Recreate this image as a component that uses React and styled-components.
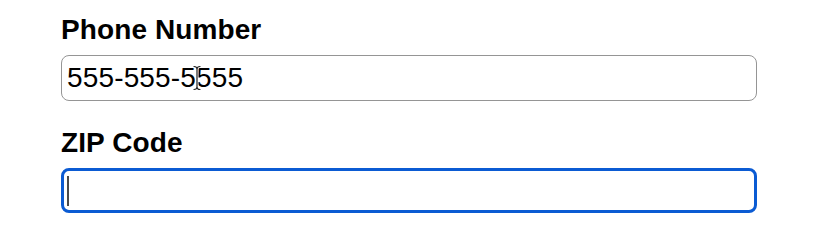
import React from "react";
import styled, { createGlobalStyle } from "styled-components";

const GlobalStyle = createGlobalStyle`
  html, body {
    margin: 0;
    padding: 0;
    background: #ffffff;
  }
  body {
    font-family: "Liberation Sans", Arial, sans-serif;
    color: #000;
  }
`;

function App() {
  return (
    <>
      <GlobalStyle />
      <Form>
        <Field>
          <Label htmlFor="phone">Phone Number</Label>
          <InputWrap>
            <Input id="phone" type="tel" defaultValue="555-555-5555" readOnly />
            <IBeam viewBox="0 0 10 26" aria-hidden="true">
              <path
                d="M2 1.5 Q5 1.5 5 4 Q5 1.5 8 1.5 M5 4 V22 M2 24.5 Q5 24.5 5 22 Q5 24.5 8 24.5"
                fill="none"
                stroke="#fff"
                strokeWidth="3"
                strokeLinecap="round"
              />
              <path
                d="M2 1.5 Q5 1.5 5 4 Q5 1.5 8 1.5 M5 4 V22 M2 24.5 Q5 24.5 5 22 Q5 24.5 8 24.5"
                fill="none"
                stroke="#222"
                strokeWidth="1.2"
                strokeLinecap="round"
              />
            </IBeam>
          </InputWrap>
        </Field>
        <Field>
          <Label htmlFor="zip">ZIP Code</Label>
          <InputWrap>
            <Input id="zip" type="text" focused readOnly />
            <Caret />
          </InputWrap>
        </Field>
      </Form>
    </>
  );
}

export default App;

const Form = styled.div`
  display: flex;
  flex-direction: column;
  gap: 26px;
  padding: 14px 0 0 61px;
  width: 696px;
`;

const Field = styled.div`
  display: flex;
  flex-direction: column;
  gap: 9px;
`;

const Label = styled.label`
  font-size: 28px;
  line-height: 32px;
  font-weight: 700;
  letter-spacing: 0.1px;
`;

const InputWrap = styled.div`
  position: relative;
`;

const Input = styled.input`
  box-sizing: border-box;
  width: 100%;
  height: ${({ focused }) => (focused ? "45px" : "46px")};
  padding: 0 0 0 ${({ focused }) => (focused ? "4px" : "5px")};
  font-family: "Liberation Sans", Arial, sans-serif;
  font-size: 28px;
  letter-spacing: 0.15px;
  color: #000;
  background: #fff;
  border: ${({ focused }) =>
    focused ? "3px solid #0b5bd3" : "1.5px solid #959595"};
  border-radius: 8px;
  outline: none;
  caret-color: transparent;
`;

const Caret = styled.span`
  position: absolute;
  left: 6px;
  top: 8px;
  width: 2px;
  height: 30px;
  background: #4a4a4a;
`;

const IBeam = styled.svg`
  position: absolute;
  left: 131px;
  top: 10px;
  width: 10px;
  height: 26px;
`;
